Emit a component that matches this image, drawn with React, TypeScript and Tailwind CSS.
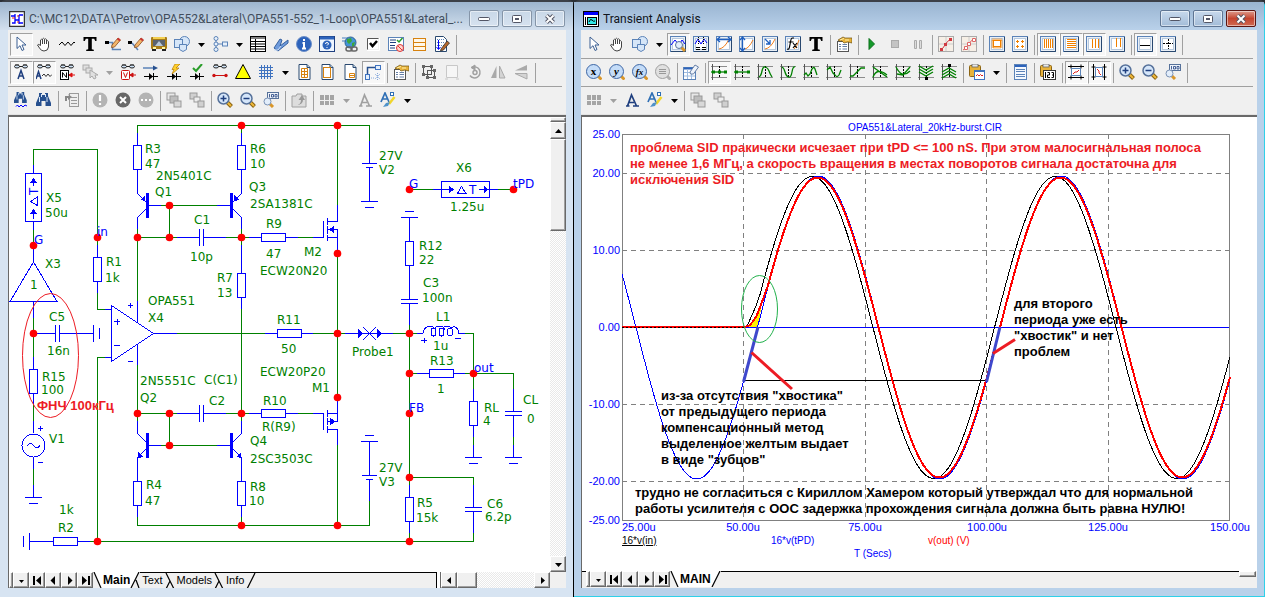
import type { ReactNode } from "react";

const NAVY = "#1f3f7f";
const STEEL = "#5b83b8";
const GREEN = "#008000";
const BLUE = "#0000ff";

/* ---------- toolbar icons, all on a 16x16 grid ---------- */

const glasses = (
  <g fill="#cfe3f7" stroke="#222" strokeWidth="1">
    <path d="M2 1h4M10 1h4M6 2.500h4" />
    <ellipse cx="4" cy="2.500" rx="2.500" ry="1.500" />
    <ellipse cx="12" cy="2.500" rx="2.500" ry="1.500" />
  </g>
);

const panel = (
  <>
    <rect x="0.500" y="0.500" width="15" height="15" fill="#e9eff6" stroke={STEEL} />
    <path d="M1 15.500H15.500V1" stroke="#29486f" fill="none" />
    <rect x="2.500" y="2.500" width="11" height="11" fill="#fff" stroke="#b7c9de" />
  </>
);

const page = (
  <>
    <path d="M3 .5h8l3 3v12H3z" fill="#fff" stroke="#29486f" />
    <path d="M11 .5v3h3" fill="#b7c9de" stroke="#29486f" />
  </>
);

const lens = (sign: ReactNode) => (
  <>
    <path d="M10 10l4.500 4.500" stroke="#8a6312" strokeWidth="4" />
    <path d="M10.500 10.500l3.500 3.500" stroke="#f0b93a" strokeWidth="2" />
    <circle cx="6.500" cy="6.500" r="5.500" fill="#d5e6fa" stroke="#56719a" strokeWidth="1.500" />
    {sign}
  </>
);

const letterLens = (letter: string, gray = false) => (
  <>
    <path d="M12 12l3.500 3.500" stroke={gray ? "#b0b0b0" : "#d9962a"} strokeWidth="3" />
    <circle cx="7.500" cy="7.500" r="7" fill={gray ? "#e0e0e0" : "#c4dcf8"} stroke={gray ? "#a0a0a0" : "#3d66a5"} />
    {gray ? (
      <path d="M4 5.500h7M4 7.500h7M4 9.500h7" stroke="#999" />
    ) : (
      <text x="7.500" y="11" textAnchor="middle" fontSize={letter.length > 1 ? 9 : 11} fontWeight="bold" fontStyle={letter === "x" ? "normal" : "italic"} fontFamily="Liberation Serif, serif" fill="#000">
        {letter}
      </text>
    )}
  </>
);

const graph = (curve: string, marks?: ReactNode) => (
  <>
    <path d="M0 2.500h16M0 13.500h16" stroke="#8c8c8c" />
    <path d="M1.500 0v16" stroke="#555" />
    <path d="M8.500 2v12" stroke="#000" strokeDasharray="2 1" />
    <path d={curve} stroke={GREEN} strokeWidth="1.300" fill="none" />
    {marks}
  </>
);

const pencil = (
  <>
    <path d="M7 9L13 2l2.500 2L9.500 11 6.500 11.500z" fill="#f2b56b" stroke="#8a4b1c" strokeWidth=".8" />
    <path d="M12.500 2.500l2.500 2" stroke="#c33" strokeWidth="2" />
  </>
);

const stack = (a: string, b: string) => (
  <g stroke="#999">
    <rect x="1" y="1" width="8" height="7" fill={a} />
    <rect x="4" y="4" width="8" height="7" fill={b} />
    <rect x="8" y="9" width="7" height="6" fill="#d8d8d8" />
  </g>
);

const binoculars = (
  <>
    <path d="M3 1h3v2h3V1h3v3l3 7v3h-5.500V9h-4v5H0v-3l3-7z" fill="#27508f" />
    <path d="M3.500 5v5M11 5v5M5.500 2v3M9.500 2v3" stroke="#d7e6fa" />
  </>
);

const tracker = (rotated: boolean) => (
  <g transform={rotated ? "rotate(90 8 8)" : undefined}>
    <path d="M0 2.500h16M0 13.500h16M3 .5v4M13 .5v4M3 11.500v4M13 11.500v4" stroke="#000" />
    <rect x="3.500" y="4.500" width="9" height="7" fill="#fff" stroke={STEEL} />
    <path d="M5 10l2-2h2l2-2" stroke="#d22" fill="none" />
  </g>
);

const clipboard = (
  <>
    <rect x=".5" y="1.500" width="11" height="11" rx="1" fill="#e8b23a" stroke="#8c6514" />
    <rect x="3" y="0" width="6" height="3" fill="#e8e8e8" stroke="#666" strokeWidth=".8" />
  </>
);

const icons: Record<string, ReactNode> = {
  pointer: <path d="M4 1v11.500l3-2.800 2 4.800 2-1-2-4.500h4z" fill="#fff" stroke="#3b5f93" />,
  hand: (
    <path d="M4.500 9.500V4q1-1.500 2 0V3q1-1.500 2 0v.5q1-1.500 2 0V5q1-1 2 .5V11q-.5 4-4.500 4-3 0-4.500-3l-2-3q1-1.500 3 .500M6.500 4v4M8.500 3.500V8M10.500 4.500V8" fill="#fff" stroke="#444" />
  ),
  wave: <path d="M0 9l3-3 3 3.500L9 6l3 3.500L15 6l1 1" fill="none" stroke="#000" />,
  text: <path d="M1.500 1h13v4h-1.300l-1-2.300H9.800v10.500l2 .5V15H4.200v-1.300l2-.5V2.700H3.800L2.800 5H1.500z" fill="#000" />,
  "wire mode": (
    <>
      <path d="M0 5h4v3H0z" fill="#000" />
      <path d="M4 6.500h3.500v7H16" stroke={STEEL} strokeWidth="1.500" fill="none" />
      {pencil}
    </>
  ),
  "diagonal wire": (
    <>
      <path d="M0 5h4v3H0z" fill="#000" />
      <path d="M4 7l6 7" stroke={STEEL} strokeWidth="1.500" />
      {pencil}
    </>
  ),
  bus: (
    <>
      <rect x="0" y="1" width="16" height="12" rx="1" fill="#a87c17" />
      <rect x="2" y="1" width="12" height="2" fill="#f3cf50" />
      <rect x="2" y="4" width="12" height="6" fill="#5b6470" />
      <path d="M4 10l4-5 4 5z" fill="#b9c9d8" />
      <path d="M2 12h3M11 12h3" stroke="#fff6a0" strokeWidth="2" />
      <path d="M1 14h4M11 14h4" stroke="#222" strokeWidth="2" />
    </>
  ),
  shapes: (
    <g stroke={STEEL} fill="#d6e6f8">
      <circle cx="10.500" cy="5.500" r="5" />
      <rect x=".5" y="3.500" width="8" height="8" />
      <path d="M5.500 8.500h7v5l-3.500 2-3.500-2z" />
    </g>
  ),
  hierarchy: (
    <g stroke={STEEL} fill="#e8f1fb">
      <path d="M4 2.500v11M4 8h6" fill="none" />
      <circle cx="4" cy="2.500" r="2" />
      <circle cx="4" cy="8" r="2" />
      <circle cx="4" cy="13.500" r="2" />
      <rect x="10.500" y="6" width="5" height="4" />
    </g>
  ),
  table: (
    <>
      <rect x=".5" y=".5" width="15" height="15" fill="#fff" stroke="#000" />
      <path d="M1 2h14M1 5.500h14M1 8h14M1 10.500h14M1 13h14M5.500 3v12" stroke="#000" />
    </>
  ),
  ribbon: (
    <>
      <path d="M1 12l6-9 2 1-2 6 8-6v3L5 15z" fill="#6f9bdc" stroke="#36609f" />
      <path d="M1 14h4l3-4" stroke="#c9dcf7" fill="none" />
    </>
  ),
  info: (
    <>
      <circle cx="8" cy="8" r="7.500" fill="#2d63bb" stroke="#6d8fc8" />
      <path d="M8 3v2M6.500 7H8v5M6 12.500h4" stroke="#fff" strokeWidth="2" fill="none" />
    </>
  ),
  help: (
    <>
      <rect x=".5" y=".5" width="15" height="15" fill="#eef5ff" stroke={NAVY} />
      <path d="M1 2h14" stroke="#2d63bb" strokeWidth="3" />
      <circle cx="8" cy="9" r="4.500" fill="#2d63bb" />
      <path d="M6.500 8q0-1.500 1.500-1.500T9.500 8L8 9.500M8 11v1" stroke="#fff" fill="none" />
    </>
  ),
  web: (
    <>
      <path d="M0 1h6v2H0zM0 4h5v2H0z" fill="#9ab7d8" />
      <circle cx="8.500" cy="6.500" r="5.500" fill="#4394d8" stroke="#2a5f93" />
      <path d="M5 3l4-1 1 3-3 3-2-2zM10 7l3-1-1 4-2 1z" fill="#3ca53c" />
      <g fill="none" stroke="#666" strokeWidth="1.500">
        <rect x="4" y="11" width="6" height="4" rx="2" />
        <rect x="9" y="11" width="6" height="4" rx="2" />
      </g>
    </>
  ),
  checkbox: (
    <>
      <path d="M14.500 2v12.500H2" stroke="#fff" fill="none" />
      <path d="M2.500 13.500v-11h11" stroke="#555" fill="none" />
      <rect x="3" y="3" width="10" height="10" fill="#fff" />
      <path d="M5 7l2.500 3L12 5" stroke="#000" strokeWidth="2.500" fill="none" />
    </>
  ),
  checklist: (
    <>
      <rect x=".5" y="1.500" width="15" height="13" fill="#fff" stroke={STEEL} />
      <path d="M2 4h6M2 6.500h6M2 9.500h5M2 12h5" stroke={NAVY} />
      <path d="M9 4l2 2 3.500-4" stroke="#2a9d2a" strokeWidth="1.500" fill="none" />
      <circle cx="12" cy="12" r="3.500" fill="#ffd6cf" stroke="#d33" />
      <path d="M10 10l4 4" stroke="#d33" />
    </>
  ),
  rows: (
    <g fill="#fff7e8" stroke="#d7820f">
      <rect x="2.500" y="2.500" width="12" height="12" />
      <path d="M2 6.500h12M2 10.500h12" />
    </g>
  ),
  "edit page": (
    <>
      <path d="M1.500 .5h8l3 3v12h-11z" fill="#fff" stroke="#29486f" />
      <path d="M3 3.500h7M3 6.500h7M3 9.500h7" stroke={STEEL} strokeDasharray="1 1" />
      <path d="M4.500 4v9M2.500 11l2 2.500 2-2.500" stroke={BLUE} fill="none" />
      <path d="M7 13l6-8 2.500 2-6 7-3 1z" fill="#b4662a" stroke="#333" strokeWidth=".8" />
    </>
  ),
  "attribute text": (
    <>
      {glasses}
      <path d="M5 15L8 6.500 11 15M6 12h4" stroke={NAVY} strokeWidth="1.500" fill="none" />
    </>
  ),
  "grid text": (
    <>
      {glasses}
      <path d="M0 15L2.500 7.500 5 15M1 12h3" stroke={NAVY} strokeWidth="1.500" fill="none" />
      <path d="M6 12l2-2 2 2.500 2-2.500 2 2.500 2-2" stroke="#333" fill="none" />
    </>
  ),
  "node numbers": (
    <>
      {glasses}
      <rect x="1.500" y="6.500" width="8" height="9" fill="#fff" stroke="#000" />
      <path d="M3.500 13.500v-5l4 5v-5" stroke="#000" fill="none" />
      <path d="M10 11h6M13 9l-3 2 3 2z" stroke="#d11" fill="#d11" />
    </>
  ),
  "node voltages": (
    <>
      {glasses}
      <rect x="1.500" y="6.500" width="8" height="9" rx="1" fill="#fff" stroke="#c11" />
      <path d="M3.500 8.500l2 5 2-5" stroke="#c11" fill="none" />
      <path d="M10 11h6M13 9l-3 2 3 2z" stroke="#c11" fill="#c11" />
    </>
  ),
  "pin connections": (
    <>
      {glasses}
      <path d="M1 11.500h14" stroke="#c11" />
      <circle cx="2" cy="11.500" r="1.700" fill="#c11" />
      <circle cx="14" cy="11.500" r="1.700" fill="#c11" />
    </>
  ),
  currents: (
    <>
      <path d="M0 4h12" stroke={STEEL} strokeWidth="1.500" />
      <path d="M10 1.500l5 2.500-5 2.500z" fill="#27508f" />
      <path d="M1 12.500h14M10.500 9v7" stroke="#000" />
      <path d="M6 9v7l4-3.500z" fill="#000" />
    </>
  ),
  power: (
    <>
      <path d="M1 12.500h14M10.500 9v7" stroke="#000" />
      <path d="M6 9v7l4-3.500z" fill="#000" />
      <path d="M9 0h5l-4 4h3l-7 6 2-4.500H6z" fill="#ffd02b" stroke="#b77b00" strokeWidth=".7" />
    </>
  ),
  conditions: (
    <>
      <path d="M1 12.500h14M10.500 9v7" stroke="#000" />
      <path d="M6 9v7l4-3.500z" fill="#000" />
      <path d="M4 4l3 3 6-7" stroke="#2a9d2a" strokeWidth="2" fill="none" />
    </>
  ),
  "gray steps": (
    <g stroke="#aaa" fill="#e0e0e0">
      <rect x="1" y="1" width="6" height="5" />
      <rect x="4" y="4" width="6" height="5" />
      <path d="M8 6v8l2-2 2 3 2-1-1-3h3z" />
    </g>
  ),
  warning: <path d="M8 .5L15.500 14.500H.5z" fill="#ffff00" stroke="#000" />,
  grid: <path d="M3.500 1v14M6.500 1v14M9.500 1v14M12.500 1v14M1 3.500h14M1 6.500h14M1 9.500h14M1 12.500h14" stroke="#3f73c0" />,
  "page grid": (
    <>
      {page}
      <path d="M5.500 4.500h6v9h-6zM5.500 7.500h6M5.500 10.500h6M8.500 4.500v9" stroke="#d7820f" fill="none" />
    </>
  ),
  "page border": (
    <>
      {page}
      <rect x="4.500" y="3.500" width="7" height="10" stroke="#d7820f" fill="none" />
    </>
  ),
  "page title": (
    <>
      {page}
      <path d="M7.500 9.500h5v4h-5zM7.500 11.500h5" stroke="#d7820f" fill="none" />
    </>
  ),
  "rubber band": (
    <>
      <path d="M2.500 11V3.500H10" stroke="#27508f" strokeWidth="1.500" fill="none" />
      <g fill="#e4effc" stroke="#3f73c0">
        <rect x="10.500" y="1.500" width="5" height="4" />
        <rect x=".5" y="10.500" width="4" height="5" />
      </g>
      <path d="M6 14h3M10 10l5 5M15 10l-5 5M12.500 9v7" stroke="#88aadd" strokeDasharray="1 1" />
    </>
  ),
  properties: (
    <>
      <rect x="1.500" y="5.500" width="11" height="10" fill="#fff" stroke="#555" />
      <path d="M3 8.500h2M6.500 8.500H11M3 10.500h2M6.500 10.500H11M3 13h2M6.500 13H11" stroke="#667fa6" />
      <path d="M2 4l5-3 2 1h7v5l-4-1-4 1-2-2H3z" fill="#e8b23a" stroke="#6b5012" strokeWidth=".7" />
      <path d="M4 4l4-1.500M9 4h4" stroke="#fff0a8" />
    </>
  ),
  "select group": (
    <g stroke="#555">
      <rect x="2.500" y="2.500" width="8" height="8" fill="none" />
      <rect x="6.500" y="6.500" width="7" height="7" fill="none" />
      <path d="M1 1h3v3H1zM9 1h3v3H9zM1 9h3v3H1zM12 5h3v3h-3zM5 12h3v3H5zM12 12h3v3h-3z" fill="#666" stroke="none" />
    </g>
  ),
  blank: <path d="M2.500 1.500h11v12h-11zM1 15h3M12 15h3" fill="#f6f6f6" stroke="#c8c8c8" />,
  rotate: (
    <g stroke="#a0a0a0" fill="none" strokeWidth="1.500">
      <path d="M5 3.500a5.500 5.500 0 1 1-2 8" />
      <circle cx="8" cy="8.500" r="2" />
      <path d="M8 1L4 3.500 8 6z" fill="#a0a0a0" strokeWidth="1" />
    </g>
  ),
  "flip horizontal": (
    <>
      <path d="M6.500 2v12H1z" fill="#aaa" />
      <path d="M9.500 2v12H15z" fill="#d4d4d4" stroke="#aaa" />
    </>
  ),
  "flip vertical": (
    <>
      <path d="M14 1v5.500H2z" fill="#aaa" />
      <path d="M14 15V9.500H2z" fill="#d4d4d4" stroke="#aaa" />
    </>
  ),
  find: (
    <>
      <g transform="translate(1 -1) scale(.85)">{binoculars}</g>
      <path d="M3 14.500l1.500-1.500L6 15l2-2 2 2 2-2 2 1" stroke={BLUE} fill="none" />
    </>
  ),
  "find next": binoculars,
  report: (
    <g stroke="#9a9a9a" fill="#eee">
      <rect x="5.500" y="1.500" width="9" height="13" />
      <path d="M7 5.500h6M7 8.500h6M7 11.500h6" />
      <path d="M1 9V4h4l-1-2 4 3-4 3V6H3v3z" fill="#888" stroke="none" />
    </g>
  ),
  "gray alert": (
    <>
      <circle cx="8" cy="8" r="7.500" fill="#b4b4b4" />
      <path d="M8 3v6M8 11v2" stroke="#fff" strokeWidth="2.200" />
    </>
  ),
  stop: (
    <>
      <circle cx="8" cy="8" r="7.500" fill="#686868" />
      <path d="M5 5l6 6M11 5l-6 6" stroke="#fff" strokeWidth="2" />
    </>
  ),
  "gray more": (
    <>
      <circle cx="8" cy="8" r="7.500" fill="#b4b4b4" />
      <path d="M3 8h10" stroke="#fff" strokeWidth="2" strokeDasharray="2 2" />
    </>
  ),
  "bring front": stack("#e8e8e8", "#bdbdbd"),
  "send back": (
    <g stroke="#999" fill="#d0d0d0">
      <rect x="1" y="1" width="7" height="6" />
      <rect x="5" y="5" width="6" height="5" fill="#eee" />
      <rect x="9" y="9" width="6" height="6" />
    </g>
  ),
  "zoom in": lens(<path d="M3.500 6.500h6M6.500 3.500v6" stroke={NAVY} strokeWidth="1.500" />),
  "zoom out": lens(<path d="M3.500 6.500h6" stroke={NAVY} strokeWidth="1.500" />),
  "zoom 100": (
    <>
      <rect x="4.500" y=".5" width="11" height="6" fill="#eef3fa" stroke="#56719a" />
      <path d="M6.500 2v3.500M8.500 2.500h2v2.500h-2zM12 2.500h2v2.500h-2z" stroke={NAVY} strokeWidth=".8" fill="none" />
      <path d="M7 12l3 3" stroke="#d9962a" strokeWidth="3" />
      <circle cx="4.500" cy="9.500" r="3.500" fill="#e3eefb" stroke="#7a91b4" />
    </>
  ),
  "folder up": (
    <g stroke="#a0a0a0" fill="#ddd">
      <path d="M1 4h4l1-2h5v2h4v11H1z" />
      <path d="M5 13q5 0 5-5H7.500L11 3l3 5h-2q0 5-7 5z" fill="#999" stroke="none" />
    </g>
  ),
  palette: <path d="M1 3h4v5H1zM6 3h4v5H6zM11 3h4v5h-4zM1 9h4v4H1zM6 9h4v4H6zM11 9h4v4h-4z" fill="#a5a5a5" />,
  "gray font": <path d="M2 14h3.500M9 14h6M3.500 14L7.500 3 12.500 14M5 10.500h5" stroke="#a0a0a0" strokeWidth="1.700" fill="none" />,
  font: <path d="M2 14h3.500M9 14h6M3.500 14L7.500 3 12.500 14M5 10.500h5" stroke={NAVY} strokeWidth="1.700" fill="none" />,
  "font brush": (
    <>
      <path d="M1 10L5 1l4 9M3 7h4" stroke="#2f6fb5" strokeWidth="1.700" fill="none" />
      <rect x="10.500" y=".5" width="3" height="3" fill="#fff" stroke="#2f6fb5" />
      <path d="M14.500 5L9 12" stroke="#f1d52c" strokeWidth="2.500" />
      <path d="M10 10l-2 4-5 1 3-4z" fill="#4f92c9" />
    </>
  ),
  "scale mode": (
    <>
      {panel}
      <path d="M1 9l4-5 4 5 3-5 3 4" stroke={BLUE} fill="none" />
      <path d="M11 11l4 4" stroke="#d9962a" strokeWidth="3" />
      <circle cx="9" cy="9" r="3.500" fill="#e3eefb" stroke="#56719a" />
    </>
  ),
  "cursor mode": (
    <>
      {panel}
      <path d="M2 8l3-5 3 5 3-5 3 4" stroke={BLUE} fill="none" />
      <path d="M5.500 1v8M10.500 1v8" stroke="#000" strokeDasharray="1 1" />
      <path d="M3 11.500h4M9 11.500h4M3 13.500h4M9 13.500h4" stroke="#000" />
    </>
  ),
  "horizontal tag": (
    <>
      {panel}
      <path d="M3 13q6-1 10-10" stroke="#f08020" fill="none" />
      <path d="M1 3.500h14M4 1L1 3.500 4 6M12 1l3 2.500L12 6" stroke="#1e5fc0" strokeWidth="1.300" fill="none" />
    </>
  ),
  "vertical tag": (
    <>
      {panel}
      <path d="M6 13q4-1 8-9" stroke="#f08020" fill="none" />
      <path d="M3.500 1v14M1 4l2.500-3L6 4M1 12l2.500 3L6 12" stroke="#1e5fc0" strokeWidth="1.300" fill="none" />
    </>
  ),
  "point tag": (
    <>
      {panel}
      <path d="M3 13q6-1 10-10" stroke="#f08020" fill="none" />
      <path d="M3 3l5 5M8 4v4H4" stroke="#1e5fc0" strokeWidth="1.300" fill="none" />
    </>
  ),
  "performance tag": (
    <>
      {panel}
      <path d="M9 13q3-2 5-9" stroke="#f08020" fill="none" />
      <path d="M9 2H7.500Q6 2 5.500 6L4.500 11Q4 14 2 13M3.500 6h5M8 7l4 5M12 7l-4 5" stroke="#000" strokeWidth="1.200" fill="none" />
    </>
  ),
  run: <path d="M5 2.500L10.500 8 5 13.500z" fill="#159a2a" stroke="#0b6f1b" />,
  "stop run": <rect x="4.500" y="4.500" width="7" height="7" fill="#c4c4c4" stroke="#aaa" />,
  pause: <path d="M4.500 4.500h2v8h-2zM9.500 4.500h2v8h-2z" fill="#ddd" stroke="#aaa" />,
  "data points": (
    <>
      <rect x=".5" y=".5" width="15" height="15" fill="#f6efe6" stroke="#aaa" />
      <path d="M8 1v14M1 8h14" stroke="#ccc" />
      <path d="M2 14q3-1 5-5t6-6" stroke="#d03a40" fill="none" />
      <path d="M2 12h3v3H2zM6 7h3v3H6zM11 2h3v3h-3z" fill="#d03a40" />
    </>
  ),
  tokens: (
    <>
      <rect x=".5" y=".5" width="15" height="15" fill="#f6efe6" stroke="#aaa" />
      <path d="M8 1v14M1 8h14" stroke="#ccc" />
      <path d="M2 14q3-1 5-5t6-6" stroke="#d66" fill="none" />
      <path d="M3.500 10.500h3v3h-3zM6.500 6.500h3v3h-3zM11.500 2.500h3v3h-3z" fill="#fff" stroke="#d66" />
    </>
  ),
  ruler: (
    <>
      {panel}
      <rect x="3.500" y="3.500" width="9" height="8" fill="#fff" stroke="#f08000" strokeWidth="2" strokeDasharray="1 1" />
      <rect x="4.500" y="4.500" width="7" height="6" fill="#fff" stroke="#f08000" />
    </>
  ),
  "plus marks": (
    <>
      {panel}
      <path d="M4 5.500h3M5.500 4v3M9 5.500h3M10.500 4v3M4 10.500h3M5.500 9v3M9 10.500h3M10.500 9v3" stroke="#f08000" />
    </>
  ),
  "vertical axes": (
    <>
      {panel}
      <path d="M4.500 3v9M6.500 3v9M8.500 3v9M10.500 3v9M12.500 3v9" stroke="#f08000" />
    </>
  ),
  "horizontal axes": (
    <>
      {panel}
      <path d="M4 3.500h9M4 5.500h9M4 7.500h9M4 9.500h9M4 11.500h9" stroke="#f08000" />
    </>
  ),
  "minor vertical": (
    <>
      {panel}
      <path d="M6.500 3v9M9.500 3v9M12.500 3v9" stroke="#f08000" />
    </>
  ),
  "minor log": (
    <>
      {panel}
      <path d="M7.500 2v9M11.500 2v9" stroke="#f08000" />
    </>
  ),
  baseline: (
    <>
      {panel}
      <path d="M3 9.500h10" stroke="#000" />
    </>
  ),
  "horizontal cursor": (
    <>
      {panel}
      <path d="M8.500 3v10M3 7.500h10" stroke="#000" strokeDasharray="2 1" />
    </>
  ),
  "x axis": letterLens("x"),
  "y axis": letterLens("y"),
  "f(x)": letterLens("fx"),
  "list lens": letterLens("", true),
  "clear table": (
    <>
      <rect x=".5" y="3.500" width="12" height="12" fill="#fff" stroke={STEEL} />
      <path d="M1 4.500h11" stroke="#2d63bb" strokeWidth="2" />
      <path d="M1 8.500h11M1 12h11M4.500 5v10M8.500 5v10" stroke="#9fbce0" />
      <path d="M7 8l5-7 3.500 2-5 7h-3z" fill="#eef3fa" stroke="#667fa6" />
    </>
  ),
  "next point": graph("M0 8h16", <path d="M1 6.500h3v3H1zM7 6.500h3v3H7zM13 6.500h3v3h-3z" fill={GREEN} />),
  interpolate: graph("M0 8h16", <path d="M1 6.500h3v3H1zM13 6.500h3v3h-3z" fill={GREEN} />),
  peak: graph("M2 13q2-1 3-6t3.500-4 3.500 4 3 6"),
  valley: graph("M2 3q2 1 3 5t3.500 5 3.500-5 3-5"),
  high: graph("M1 11l2-2 2 3 2-2 2-5q2-3 3 0l2 6"),
  low: graph("M1 6l3-3 3 6 2 2q2 3 4 0l2-5"),
  inflection: graph("M1 12h3l8-8h4"),
  "global high": graph("M1 13q4-10 14-2M1 3l14 10"),
  "global low": graph("M1 3q6 12 14 4M2 10l6 1 7-8"),
  bottom: graph("M1 2l7 4 7-4M1 5l7 4 7-4M1 8l7 4 7-4", <path d="M7 13h3v3H7z" fill="#000" />),
  top: graph("M1 14l7-4 7 4M1 11l7-4 7 4M1 8l7-4 7 4", <path d="M7 0h3v3H7z" fill="#000" />),
  "copy plot": (
    <>
      {clipboard}
      <rect x="5.500" y="6.500" width="10" height="9" fill="#fff" stroke="#3f73c0" />
      <path d="M6 7.500h9" stroke="#3f73c0" />
      <path d="M7 12l1.500-1.500L10 12l1.500-1.500L13 12l1-1" stroke="#d22" fill="none" />
    </>
  ),
  notes: (
    <>
      <rect x="2.500" y=".5" width="12" height="15" fill="#f4f8fe" stroke={STEEL} />
      <path d="M3 2h11" stroke="#2d63bb" strokeWidth="2" />
      <path d="M4 5.500h9M4 7.500h9M4 10.500h9M4 12.500h9" stroke={STEEL} />
    </>
  ),
  "paste numbers": (
    <>
      {clipboard}
      <rect x="3.500" y="6.500" width="12" height="9" fill="#fff" stroke="#333" />
      <path d="M5.500 8v6M7.500 8.500h2v2.500h-2v2.500h2.500M11.500 8.500h2v5h-2M12 11h1.500" stroke="#000" fill="none" />
    </>
  ),
  "x tracker": tracker(false),
  "y tracker": tracker(true),
};

/* ---------- toolbar ---------- */

// "!" pressed, "|" separator, "v" drop arrow, "v-" disabled drop arrow
const leftRows = [
  ["!pointer", "hand", "wave", "text", "wire mode", "diagonal wire", "bus", "shapes", "v", "hierarchy", "v", "table", "ribbon", "info", "help", "web", "checkbox", "checklist", "rows", "edit page", "|"],
  ["!attribute text", "!grid text", "node numbers", "gray steps", "v-", "node voltages", "currents", "power", "conditions", "pin connections", "warning", "grid", "v", "page grid", "page border", "page title", "!rubber band", "|", "properties", "|", "select group", "blank", "rotate", "flip horizontal", "flip vertical", "|"],
  ["find", "find next", "|", "report", "|", "gray alert", "stop", "gray more", "|", "bring front", "send back", "|", "zoom in", "zoom out", "zoom 100", "|", "folder up", "|", "palette", "v-", "gray font", "font brush", "v"],
];

const rightRows = [
  ["pointer", "hand", "shapes", "v", "!scale mode", "cursor mode", "horizontal tag", "vertical tag", "point tag", "performance tag", "text", "|", "properties", "|", "run", "stop run", "pause", "|", "data points", "tokens", "|", "ruler", "plus marks", "|", "!vertical axes", "!horizontal axes", "!minor vertical", "minor log", "|", "!baseline", "horizontal cursor", "|"],
  ["x axis", "y axis", "f(x)", "list lens", "|", "clear table", "|", "!next point", "interpolate", "peak", "valley", "high", "low", "inflection", "global high", "global low", "bottom", "top", "|", "copy plot", "v", "|", "notes", "|", "paste numbers", "|", "!x tracker", "!y tracker", "|", "zoom in", "zoom out", "zoom 100", "|"],
  ["palette", "v-", "font", "font brush", "v", "|", "bring front", "send back"],
];

function ToolButton({ item }: { item: string }) {
  if (item === "|") {
    return <span className="mx-[2px] h-5 w-px shrink-0 bg-[#a0a0a0]" />;
  }
  if (item === "v" || item === "v-") {
    return (
      <button type="button" aria-label="More options" disabled={item === "v-"} className="flex h-[23px] w-[15px] shrink-0 items-center justify-center">
        <svg width="7" height="4" className={item === "v" ? "fill-black" : "fill-[#a0a0a0]"}>
          <path d="M0 0h7L3.500 4z" />
        </svg>
      </button>
    );
  }
  const pressed = item.startsWith("!");
  const name = pressed ? item.slice(1) : item;
  return (
    <button
      type="button"
      aria-label={name}
      aria-pressed={pressed}
      className={
        "flex h-[23px] w-[23px] shrink-0 items-center justify-center border pr-px pb-px " +
        (pressed ? "border-t-[#a0a0a0] border-l-[#a0a0a0] border-r-white border-b-white bg-[#f7f7f7]" : "border-transparent")
      }
    >
      <svg width="16" height="16" viewBox="0 0 16 16" fill="none">
        {icons[name]}
      </svg>
    </button>
  );
}

function Toolbars({ rows }: { rows: string[][] }) {
  return (
    <div className="pt-px">
      {rows.map((row, i) => (
        <div key={i} className="mr-1 flex h-7 items-center overflow-hidden border-b border-[#a0a0a0] pl-[2px] last:mr-0 last:border-[#e3e3e3]">
          {row.map((item, j) => (
            <ToolButton key={j} item={item} />
          ))}
        </div>
      ))}
    </div>
  );
}

/* ---------- window chrome ---------- */

function CaptionButtons({ active }: { active?: boolean }) {
  const base = "flex h-[17px] w-[30px] items-center justify-center rounded-[2px] border shadow-[inset_0_0_0_1px_rgba(255,255,255,0.5)] ";
  const plain = active
    ? "border-[#5f7593] bg-linear-to-b from-[#c8d9ec] to-[#a3bcd8]"
    : "border-[#8595a8] bg-linear-to-b from-[#c9d8e8] to-[#d6e2ef]";
  return (
    <div className="flex shrink-0 gap-[3px]">
      <button type="button" aria-label="Minimize" className={base + plain}>
        <svg width="12" height="6">
          <rect x=".5" y="1.500" width="11" height="3" rx="1" fill="#fff" stroke="#535666" />
        </svg>
      </button>
      <button type="button" aria-label="Maximize" className={base + plain}>
        <svg width="12" height="10">
          <rect x="1.500" y="1.500" width="9" height="7" rx="1" fill="#fff" stroke="#535666" />
          <rect x="4.500" y="4.500" width="3" height="1" fill="#b5c8dc" stroke="#535666" />
        </svg>
      </button>
      <button
        type="button"
        aria-label="Close"
        className={base + (active ? "border-[#5b1410] bg-linear-to-b from-[#dc9a8c] via-[#c5442f] to-[#cf6a53]" : plain)}
      >
        <svg width="12" height="10">
          <path d="M2.500 1.500l7 7M9.500 1.500l-7 7" stroke="#535666" strokeWidth="4" />
          <path d="M2.500 1.500l7 7M9.500 1.500l-7 7" stroke="#fff" strokeWidth="2" />
        </svg>
      </button>
    </div>
  );
}

const raised = "border border-t-white border-l-white border-r-[#696969] border-b-[#696969] bg-[#f0f0f0] shadow-[inset_-1px_-1px_0_#a0a0a0]";

function ArrowButton({ label, d, className = "h-4 w-4" }: { label: string; d: string; className?: string }) {
  return (
    <button type="button" aria-label={label} className={`flex shrink-0 items-center justify-center ${raised} ${className}`}>
      <svg width="11" height="9" viewBox="0 0 11 9" className="shrink-0">
        <path d={d} />
      </svg>
    </button>
  );
}

function SheetNav() {
  return (
    <div className="flex shrink-0 bg-[#696969]">
      <span className={`w-1 ${raised}`} />
      <ArrowButton label="Sheet list" d="M3 4h5L5.500 7z" />
      <ArrowButton label="First sheet" d="M1 0h2v9H1zM9 0v9L4 4.500z" />
      <ArrowButton label="Previous sheet" d="M7 0v9L2.500 4.500z" />
      <ArrowButton label="Next sheet" d="M4 0v9l4.500-4.500z" />
      <ArrowButton label="Last sheet" d="M8 0h2v9H8zM2 0v9l5-4.500z" />
    </div>
  );
}

function Slant({ d, fill }: { d: string; fill?: string }) {
  return (
    <svg width="10" height="16" className="shrink-0">
      {fill && <path d={fill} fill="#fff" />}
      <path d={d} stroke="#000" fill="none" strokeWidth="1.200" />
    </svg>
  );
}

const sheetText = "text-[12px] leading-4 font-['Liberation_Sans',Arial,sans-serif]";
const idleTab = "border-t border-black px-[2px] text-[11px] leading-[15px]";

/* ---------- schematic ---------- */

const wires = [
  "M33.500 165V149.500H97.500V245M33.500 230V245M33.500 318V357M33.500 405V421M33.500 469V485",
  "M97.500 293V309.500H105M105 357.500H97.500V541M90 541.500H473.500V533M409.500 533V541",
  "M137.500 133V125.500H369.500V141M137.500 229V301M137.500 365V421M137.500 517V525.500H369.500V501",
  "M241.500 125V133M241.500 229V245M241.500 309V421M241.500 517V525",
  "M161 205.500H217M169.500 205V237M137 237.500H177M226 237.500H249M298 237.500H313",
  "M161 445.500H217M169.500 413V445M137 413.500H177M226 413.500H249M298 413.500H313",
  "M337.500 125V205M337.500 253V397M337.500 445V525",
  "M177 333.500H265M313 333.500H345M393 333.500H417M465 333.500H473.500V389",
  "M409 189.500H433M498 189.500H513M409.500 325V485M409 373.500H417M465 373.500H513.500V389",
  "M409 477.500H473.500V485M473.500 437V445M513.500 437V445",
];

const leads = [
  // left column: X5, X3, C5, R15, V1
  "M33.500 165V173M33.500 222V230M33.500 245V262M33.500 302V318M33 333.500H55M60 333.500H93M55.500 325V342M59.500 325V342M93.500 325V342M99.500 328V339",
  "M33.500 357V369M33.500 394V405M33.500 421V433M33.500 457V469M33.500 485V497M25 497.500H42M29 503.500H38",
  "M38 428.500H43M40.500 426V431M38 462.500H43",
  "M97.500 245V257M97.500 282V293M105 309.500H112M105 357.500H112M114 321.500H120M117.500 319V325M114 345.500H120M128 305.500H133M130.500 303V308M128 361.500H133",
  "M137.500 301V323M137.500 344V365M153 333.500H177",
  // Q1 and Q3
  "M137.500 133V145M137.500 170V193.500L146 202M146 209L137.500 217.500V229M149 205.500H161",
  "M241.500 133V145M241.500 170V193.500L233 202M233 209L241.500 217.500V229M217 205.500H230",
  // Q2 and Q4
  "M137.500 421V433.500L146 442M146 449L137.500 457.500V481M137.500 506V517M149 445.500H161",
  "M241.500 421V433.500L233 442M233 449L241.500 457.500V481M241.500 506V517M217 445.500H230",
  // C1, R9, C2, R10
  "M177 237.500H199M204 237.500H226M199.500 229V246M203.500 229V246M249 237.500H261M286 237.500H298M313 237.500H323",
  "M177 413.500H199M204 413.500H226M199.500 405V422M203.500 405V422M249 413.500H261M286 413.500H298M313 413.500H323",
  "M241.500 245V273M241.500 298V309",
  // M2 and M1
  "M323.500 221V238M327.500 218V225M327.500 226V234M327.500 235V241M337.500 205V221.500H328M328 229.500H337.500V253M328 237.500H337",
  "M323.500 413V430M327.500 410V417M327.500 418V425M327.500 426V433M337.500 397V421.500H328M328 413.500H337M328 429.500H337.500V445",
  // supplies
  "M369.500 141V163M362 163.500H377M366 167.500H373M369.500 168V201M361 201.500H378M365 207.500H374",
  "M365 435.500H374M361 441.500H378M369.500 441V475M362 475.500H377M366 479.500H373M369.500 480V501",
  // output side
  "M265 333.500H277M302 333.500H313M345 333.500H393M363 327L376 340M376 327L363 340",
  "M433 189.500H453M479 189.500H498M405 211.500H414M401 217.500H418M409.500 217V241M409.500 266V299M401 299.500H418M401 303.500H418M409.500 304V325",
  "M417 373.500H429M454 373.500H465M473.500 389V401M473.500 426V437M473.500 445V457M465 457.500H482M469 463.500H478",
  "M513.500 389V411M505 411.500H522M505 415.500H522M513.500 416V437M513.500 445V457M505 457.500H522M509 463.500H518",
  "M409.500 485V497M409.500 522V533M473.500 485V507M465 507.500H482M465 511.500H482M473.500 512V533",
  "M23.500 536V547M29.500 533V550M29 541.500H53M78 541.500H90M421 340.500H427M424.500 338V343M455 338.500H461",
  "M111.500 305.500L153.500 333.500L111.500 361.500ZM33.500 262L57 301.500H10Z",
];

const boxes = [
  [25, 173, 16, 48], [441, 181, 48, 16],
  [133, 145, 8, 24], [237, 145, 8, 24], [237, 273, 8, 24], [93, 257, 8, 24], [29, 369, 8, 24],
  [133, 481, 8, 24], [237, 481, 8, 24], [405, 241, 8, 24], [469, 401, 8, 24], [405, 497, 8, 24],
  [261, 233, 24, 8], [261, 409, 24, 8], [277, 329, 24, 8], [429, 369, 24, 8], [53, 537, 24, 8],
];

const nodes = [
  [33, 245], [97, 237], [33, 333], [137, 237], [169, 205], [169, 237], [241, 125], [337, 125], [241, 237],
  [337, 253], [337, 333], [409, 333], [409, 189], [513, 189], [409, 373], [473, 373], [409, 413], [409, 477],
  [409, 541], [337, 397], [337, 525], [241, 525], [241, 413], [137, 413], [169, 413], [169, 445], [97, 541],
];

const partLabels: [number, number, string][] = [
  [145, 153, "R3"], [145, 168, "47"], [156, 180, "2N5401C"], [155, 196, "Q1"], [250, 153, "R6"], [250, 168, "10"],
  [249, 191, "Q3"], [250, 208, "2SA1381C"], [194, 224, "C1"], [190, 261, "10p"], [266, 228, "R9"], [266, 258, "47"],
  [304, 256, "M2"], [260, 275, "ECW20N20"], [217, 282, "R7"], [217, 297, "13"], [106, 266, "R1"], [105, 282, "1k"],
  [46, 202, "X5"], [45, 217, "50u"], [45, 268, "X3"], [30, 289, "1"], [148, 305, "OPA551"], [148, 322, "X4"],
  [49, 321, "C5"], [47, 355, "16n"], [42, 381, "R15"], [41, 394, "100"], [49, 443, "V1"], [59, 514, "1k"],
  [58, 532, "R2"], [140, 385, "2N5551C"], [140, 402, "Q2"], [204, 384, "C(C1)"], [209, 405, "C2"], [263, 405, "R10"],
  [262, 431, "R(R9)"], [250, 445, "Q4"], [250, 463, "2SC3503C"], [146, 489, "R4"], [145, 505, "47"], [250, 491, "R8"],
  [249, 505, "10"], [277, 324, "R11"], [281, 353, "50"], [260, 376, "ECW20P20"], [312, 392, "M1"], [352, 356, "Probe1"],
  [379, 160, "27V"], [379, 174, "V2"], [456, 172, "X6"], [450, 211, "1.25u"], [419, 250, "R12"], [419, 264, "22"],
  [423, 287, "C3"], [422, 302, "100n"], [436, 321, "L1"], [433, 350, "1u"], [430, 365, "R13"], [437, 393, "1"],
  [484, 412, "RL"], [483, 425, "4"], [523, 404, "CL"], [527, 423, "0"], [379, 472, "27V"], [379, 486, "V3"],
  [417, 507, "R5"], [416, 522, "15k"], [487, 508, "C6"], [485, 521, "6.2p"],
];

const netLabels: [number, number, string][] = [
  [34, 244, "G"], [97, 236, "in"], [409, 188, "G"], [513, 188, "tPD"], [474, 372, "out"], [409, 412, "FB"],
];

function Schematic() {
  return (
    <svg className="min-h-[455px] min-w-0 flex-1 bg-white" role="img" aria-label="Schematic">
      <g transform="translate(-9 -117)" fill="none">
        <g stroke={GREEN} shapeRendering="crispEdges">
          {wires.map((d) => <path key={d} d={d} />)}
        </g>
        <g stroke={BLUE} shapeRendering="crispEdges">
          {leads.map((d) => <path key={d} d={d} />)}
          {boxes.map(([x, y, w, h]) => <rect key={`${x}-${y}`} x={x + 0.5} y={y + 0.5} width={w} height={h} />)}
          <circle cx="33.500" cy="445.500" r="11.500" />
          <path d="M27 446q3-5 6.500-.5t6.500 0" />
          <path d="M33.500 178V186M33.500 211V219M417 333.500H423Q424 326.500 430 326.500T436 333M434 329q2-3 6-3t5 4M442 329q2-3 5-3t6 4M450 329q2-3 5-2 4 2 4 6.500H465" />
          <path d="M457.500 193.500H466L461.500 186.500ZM37.500 205.500V197L30.500 201.500Z" />
          <ellipse cx="433.500" cy="332" rx="2.500" ry="4" />
          <ellipse cx="441.500" cy="332" rx="2.500" ry="4" />
          <ellipse cx="450" cy="332" rx="2.500" ry="4" />
        </g>
        <g fill={BLUE} shapeRendering="crispEdges">
          <path d="M146 193h3v25h-3zM230 193h3v25h-3zM146 433h3v25h-3zM230 433h3v25h-3z" />
          <path d="M145 201l-5-1 5-5zM234 201v-6l5 5zM138 458v-6l5 5zM241 458v-6l-5 5z" />
          <path d="M329 229.500l5-4v8zM335 421.500l-5-4v8zM358 329v9l5-4.500zM377 329v9l5-4.500z" />
          <path d="M449 186v7l5-3.500zM484 186v7l4-3.500zM30 183h7l-3.500-5zM30 214h7l-3.500-5z" />
        </g>
        <g fill="#ff0000">
          {nodes.map(([x, y]) => <circle key={`${x}-${y}`} cx={x + 0.5} cy={y + 0.5} r="3.800" />)}
        </g>
        <ellipse cx="50.500" cy="355.500" rx="28" ry="62" stroke="#ed1c24" />
        <g fontFamily="DejaVu Sans, Verdana, sans-serif" fontSize="12">
          <g fill={GREEN}>
            {partLabels.map(([x, y, t]) => <text key={`${x}-${y}`} x={x} y={y}>{t}</text>)}
          </g>
          <g fill={BLUE}>
            {netLabels.map(([x, y, t]) => <text key={`${x}-${y}`} x={x} y={y}>{t}</text>)}
            <text x="469" y="194">T</text>
            <text transform="translate(38 195) rotate(-90)">T</text>
          </g>
        </g>
        <text x="37" y="410" fill="#ed1c24" fontSize="13" fontWeight="bold" fontFamily="Liberation Sans, Arial, sans-serif">
          ФНЧ 100кГц
        </text>
      </g>
    </svg>
  );
}

/* ---------- transient plot ---------- */

const ZERO = 327.5;
const PERIOD = 243;

function sine(from: number, to: number, x0: number, amp: number) {
  const pts: string[] = [];
  for (let x = from; x <= to; x += 2) {
    pts.push(`${x} ${(ZERO - amp * Math.sin((2 * Math.PI * (x - x0)) / PERIOD)).toFixed(1)}`);
  }
  return pts.join("L");
}

const inputCurve = "M745 327L748 324L752 315L756 306L" + sine(760, 1230, 751.5, 151);
const delayedCurve = "M" + sine(622, 1230, 757.5, 151.5);
const outputCurve = "M622 327H745L750 325L754 320L757 315L762 302L" + sine(768, 1230, 757, 150);

const yTicks: [number, string][] = [
  [134, "25.00"], [173, "20.00"], [250, "10.00"], [327, "0.00"], [404, "-10.00"], [481, "-20.00"], [520, "-25.00"],
];
const xTicks: [number, string][] = [
  [743, "50.00u"], [865, "75.00u"], [987, "100.00u"], [1108, "125.00u"], [1230, "150.00u"],
];

const notes: { x: number; y: number; color: string; lines: string[] }[] = [
  {
    x: 630, y: 152, color: "#ed1c24",
    lines: [
      "проблема SID пракически исчезает при tPD <= 100 nS. При этом малосигнальная полоса",
      "не менее 1,6 МГц, а скорость вращения в местах поворотов сигнала достаточна для",
      "исключения SID",
    ],
  },
  {
    x: 661, y: 400, color: "#000",
    lines: ['из-за отсутствия "хвостика"', "от предыдущего периода", "компенсационный метод", "выделенное желтым выдает", 'в виде "зубцов"'],
  },
  { x: 1014, y: 308, color: "#000", lines: ["для второго", "периода уже есть", '"хвостик" и нет', "проблем"] },
  {
    x: 635, y: 497, color: "#000",
    lines: [
      "трудно не согласиться с Кириллом Хамером который утверждал что для нормальной",
      "работы усилителя с ООС задержка прохождения сигнала должна быть равна НУЛЮ!",
    ],
  },
];

function Plot() {
  return (
    <svg className="min-h-[454px] w-full flex-1 bg-white" role="img" aria-label="Transient plot">
      <g transform="translate(-582 -117)" fill="none" fontFamily="Liberation Sans, Arial, sans-serif">
        <g stroke="#808080" shapeRendering="crispEdges">
          <rect x="622.500" y="134.500" width="607" height="386" />
          <path strokeDasharray="5 4" d="M743.500 134V520M865.500 134V520M986.500 134V520M1108.500 134V520M622 173.500H1229M622 250.500H1229M622 404.500H1229M622 481.500H1229" />
        </g>
        <g shapeRendering="crispEdges">
          <path d="M745 327.500H1229" stroke={BLUE} />
          <path d="M745 327L754 322L762 303L758 327Z" fill="#fff200" />
          <path d="M743 380.500H988" stroke="#000" />
          <path d={inputCurve} stroke="#000" />
          <path d={delayedCurve} stroke={BLUE} />
          <path d={outputCurve} stroke="#ff0000" strokeWidth="2" />
          <path d="M622 327.500H745" stroke="#000" strokeDasharray="2 2" />
        </g>
        <path d="M743.500 382L758 327M986.500 382L1000 327" stroke="#3f48cc" strokeWidth="3" />
        <path d="M751.500 352.500L792 389M993 353.500L1015 339.500" stroke="#ed1c24" strokeWidth="3" />
        <ellipse cx="759.500" cy="309" rx="18" ry="33.500" stroke="#22b14c" />
        <g fill={BLUE} fontSize="11">
          {yTicks.map(([y, t]) => <text key={y} x="620" y={y + 4} textAnchor="end">{t}</text>)}
          <text x="622" y="531">25.00u</text>
          {xTicks.map(([x, t]) => <text key={x} x={x} y="531" textAnchor="middle">{t}</text>)}
        </g>
        <g fill={BLUE} fontSize="10">
          <text x="925" y="131" textAnchor="middle">OPA551&amp;Lateral_20kHz-burst.CIR</text>
          <text x="622" y="544" fill="#000" textDecoration="underline">16*v(in)</text>
          <text x="771" y="544">16*v(tPD)</text>
          <text x="928" y="544" fill="#ff0000">v(out) (V)</text>
          <text x="854" y="557">T (Secs)</text>
        </g>
        <g fontSize="13" fontWeight="bold">
          {notes.map((n) => (
            <text key={n.y} fill={n.color}>
              {n.lines.map((line, i) => <tspan key={line} x={n.x} y={n.y + i * 16}>{line}</tspan>)}
            </text>
          ))}
        </g>
      </g>
    </svg>
  );
}

/* ---------- windows ---------- */

const titleText = "min-w-0 flex-1 truncate text-[12px] leading-5 font-['Roboto','Segoe_UI',sans-serif]";
const track = "bg-[repeating-conic-gradient(#ffffff_0_25%,#e9e9e9_0_50%)] bg-[length:2px_2px]";

function SchematicWindow() {
  return (
    <section className="flex w-[574px] min-w-0 shrink flex-col rounded-t-md border-t-2 border-r border-t-[#3c4048] border-r-black bg-[#d7e4f2] pr-[7px] pb-[9px] pl-2">
      <header className="-mr-[7px] -ml-2 flex h-7 items-center gap-1 bg-linear-to-b from-[#9db5ce] to-[#d3e0ee] pt-[5px] pr-2 pl-[9px]">
        <svg width="16" height="16" className="shrink-0">
          <rect x=".5" y=".5" width="15" height="15" fill="#fff" stroke="#333" strokeWidth="1.500" />
          <path d="M2 5h4V3M6 5v7H3M6 9h4M10 4v9M10 4h4M10 12h4" stroke={BLUE} strokeWidth="1.300" fill="none" />
          <path d="M3 7h3M8 5h2M8 11h2" stroke="#d22" />
        </svg>
        <h1 className={`${titleText} text-[#414d5c]`}>C:\MC12\DATA\Petrov\OPA552&amp;Lateral\OPA551-552_1-Loop\OPA551&amp;Lateral_...</h1>
        <CaptionButtons />
      </header>
      <div className="flex flex-1 flex-col bg-[#f0f0f0]">
        <Toolbars rows={leftRows} />
        <div className="flex flex-1 flex-col border-t-2 border-l border-[#696969]">
          <div className="flex flex-1">
            <Schematic />
            <div className={`flex w-4 shrink-0 flex-col ${track}`}>
              <span className={`h-[5px] ${raised}`} />
              <ArrowButton label="Scroll up" d="M2 7h7L5.500 3z" className="h-[17px] w-4" />
              <span className={`h-[92px] ${raised}`} />
              <span className="flex-1" />
              <ArrowButton label="Scroll down" d="M2 3h7L5.500 7z" />
            </div>
          </div>
          <footer className="flex h-4 items-stretch">
            <SheetNav />
            <nav className={`flex min-w-0 flex-1 items-start overflow-hidden ${sheetText}`}>
              <Slant d="M1 0L8 16" fill="M1 0L8 16H10V0Z" />
              <button type="button" className="bg-white font-bold">Main</button>
              <Slant d="M9 0L1 16M6 8L9 16" fill="M0 0H9L1 16H0Z" />
              <button type="button" className={idleTab}>Text</button>
              <span className="border-t border-black"><Slant d="M1 0L9 16M1 16L5 8" /></span>
              <button type="button" className={idleTab}>Models</button>
              <span className="border-t border-black"><Slant d="M1 0L9 16M1 16L5 8" /></span>
              <button type="button" className={idleTab}>Info</button>
              <span className="border-t border-black"><Slant d="M9 0L1 16" /></span>
              <span className="h-4 flex-1 border-t border-black" />
            </nav>
            <span className="w-[5px] border-x border-black border-r-[#696969] bg-white" />
            <ArrowButton label="Scroll left" d="M7 1v7L3 4.500z" />
            <span className={`w-5 ${raised}`} />
            <span className={`w-[57px] ${track}`} />
            <ArrowButton label="Scroll right" d="M4 1v7l4-3.500z" />
            <span className="w-4" />
          </footer>
        </div>
      </div>
    </section>
  );
}

function AnalysisWindow() {
  return (
    <section className="flex min-w-0 flex-1 flex-col rounded-t-md border-t-2 border-r border-b border-t-[#3c4048] border-r-[#2fd0e8] border-b-[#2fd0e8] bg-[#b9d1ea] pr-[7px] pb-2 pl-[7px]">
      <header className="-mr-[7px] -ml-[7px] flex h-7 items-center gap-1 bg-linear-to-b from-[#99b4d1] to-[#b9d1ea] pt-[5px] pr-2 pl-[9px]">
        <svg width="16" height="16" className="shrink-0">
          <rect x=".5" y=".5" width="15" height="15" fill="#fff" stroke="#000" />
          <path d="M1 2.500h14" stroke={BLUE} strokeWidth="3" />
          <rect x="4.500" y="6.500" width="9" height="7" fill="#30e8e8" stroke="#000" />
          <path d="M6 11q1.500-4 3-2t3 1M2.500 6v8" stroke="#000" fill="none" />
        </svg>
        <h1 className={`${titleText} text-[#10151c]`}>Transient Analysis</h1>
        <CaptionButtons active />
      </header>
      <div className="flex flex-1 flex-col bg-[#f0f0f0]">
        <Toolbars rows={rightRows} />
        <div className="flex flex-1 flex-col border-t-2 border-l border-[#696969]">
          <Plot />
          <footer className="flex h-[17px] items-start">
            <span className="w-1 self-stretch border-t border-black" />
            <SheetNav />
            <nav className={`flex min-w-0 flex-1 items-start ${sheetText}`}>
              <Slant d="M1 0L8 16" fill="M1 0L8 16H10V0Z" />
              <button type="button" className="bg-white font-bold">MAIN</button>
              <Slant d="M9 0L1 16" fill="M0 0H9L1 16H0Z" />
              <span className="h-4 flex-1 border-t border-black" />
            </nav>
            <span className={`mr-px h-[6px] w-[17px] ${raised}`} />
          </footer>
        </div>
      </div>
    </section>
  );
}

export default function App() {
  return (
    <main className="flex min-h-screen bg-[#2b2f36]">
      <SchematicWindow />
      <AnalysisWindow />
    </main>
  );
}
